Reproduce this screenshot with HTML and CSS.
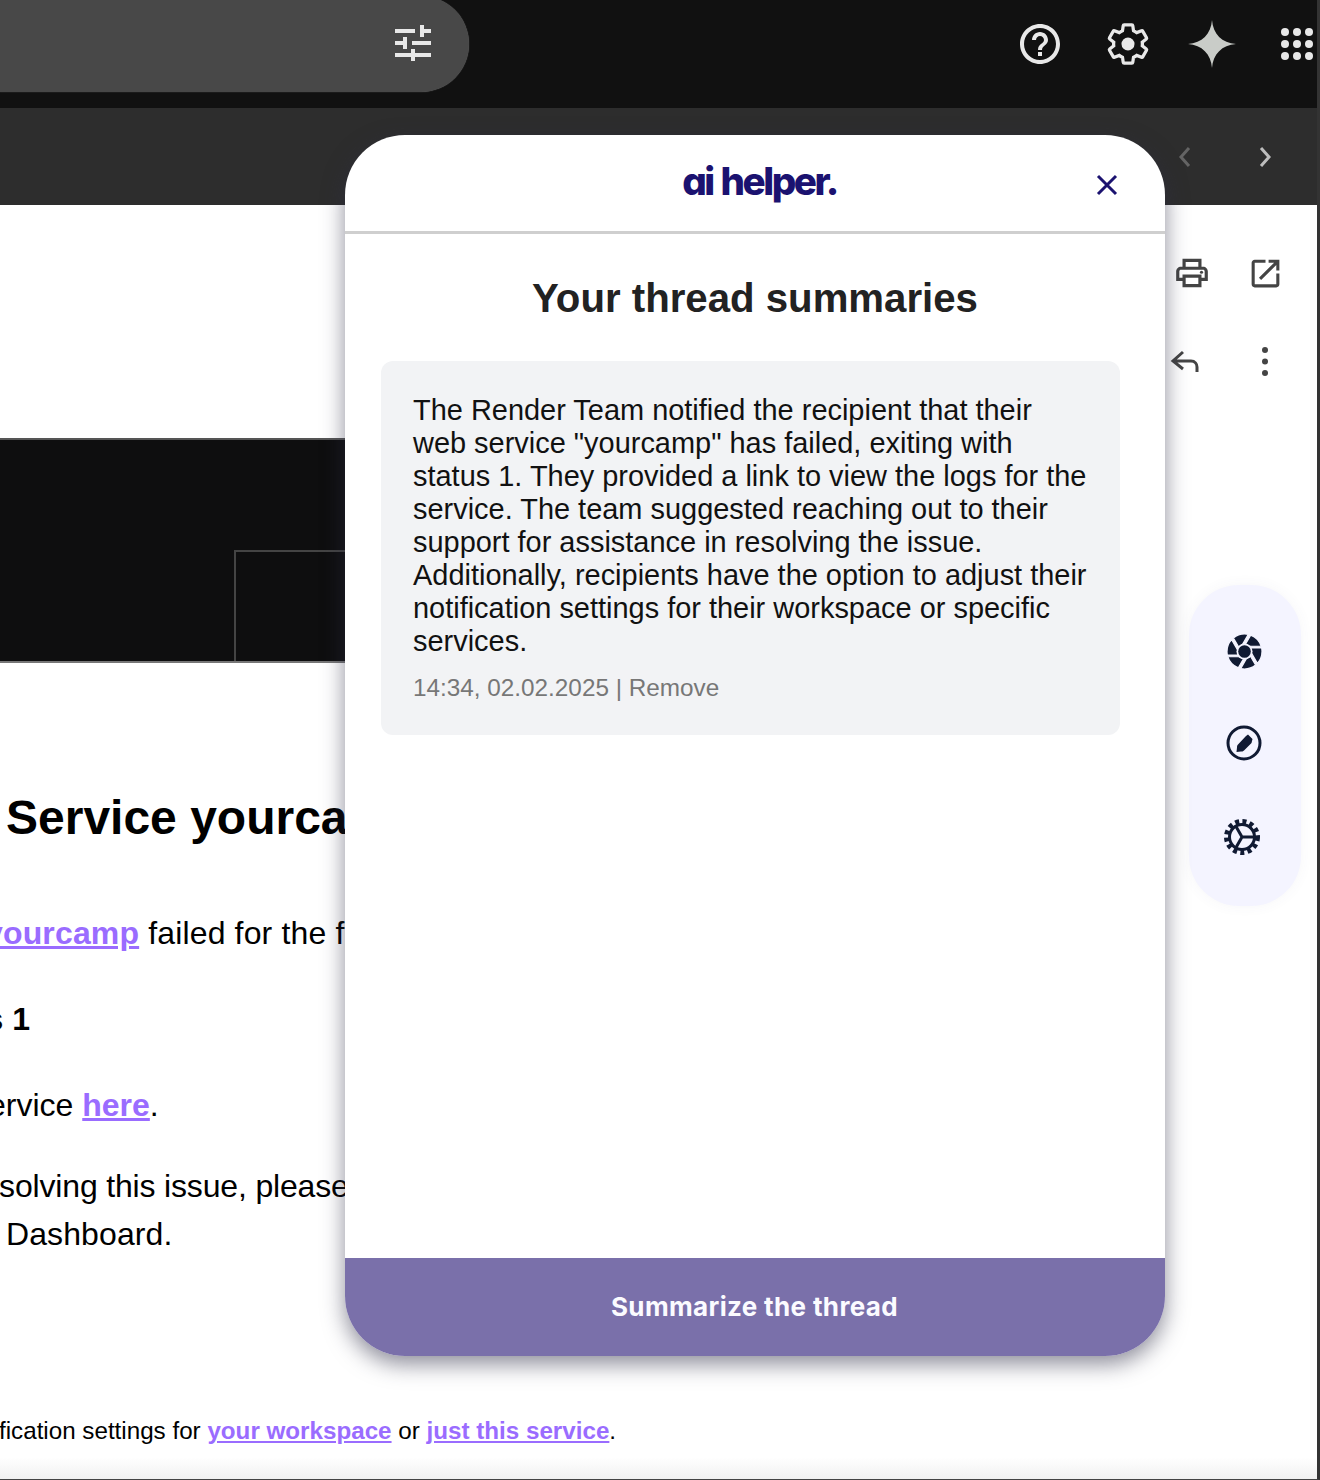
FILE: index.html
```html
<!DOCTYPE html>
<html lang="en">
<head>
<meta charset="utf-8">
<title>Mail with AI helper</title>
<link rel="stylesheet" href="styles.css">
</head>
<body>
<div class="window">
  <header class="topbar">
    <div class="search">
      <svg class="tune" viewBox="0 0 36 36" width="36" height="36" aria-hidden="true">
        <rect x="0" y="4" width="20" height="4"/><rect x="25" y="0" width="4" height="12"/><rect x="29" y="4" width="7" height="4"/>
        <rect x="0" y="16" width="8" height="4"/><rect x="8" y="12" width="4" height="12"/><rect x="17" y="16" width="19" height="4"/>
        <rect x="0" y="28" width="16" height="4"/><rect x="16" y="24" width="4" height="12"/><rect x="20" y="28" width="16" height="4"/>
      </svg>
    </div>
    <div class="top-actions">
      <svg class="ico-help" viewBox="0 0 24 24" width="48" height="48" aria-hidden="true"><path d="M11 18h2v-2h-2v2zm1-16C6.48 2 2 6.48 2 12s4.48 10 10 10 10-4.48 10-10S17.52 2 12 2zm0 18c-4.41 0-8-3.59-8-8s3.59-8 8-8 8 3.59 8 8-3.59 8-8 8zm0-14c-2.21 0-4 1.79-4 4h2c0-1.1.9-2 2-2s2 .9 2 2c0 2-3 1.75-3 5h2c0-2.25 3-2.5 3-5 0-2.21-1.79-4-4-4z"/></svg>
      <svg class="ico-gear" viewBox="0 0 24 24" width="46" height="46" aria-hidden="true"><path class="gear-line" d="M19.43 12.98c.04-.32.07-.64.07-.98s-.03-.66-.07-.98l2.11-1.65c.19-.15.24-.42.12-.64l-2-3.46c-.12-.22-.39-.3-.61-.22l-2.49 1c-.52-.4-1.08-.73-1.69-.98l-.38-2.65C14.46 2.18 14.25 2 14 2h-4c-.25 0-.46.18-.49.42l-.38 2.65c-.61.25-1.17.59-1.69.98l-2.49-1c-.23-.09-.49 0-.61.22l-2 3.46c-.13.22-.07.49.12.64l2.11 1.65c-.04.32-.07.65-.07.98s.03.66.07.98l-2.11 1.65c-.19.15-.24.42-.12.64l2 3.46c.12.22.39.3.61.22l2.49-1c.52.4 1.08.73 1.69.98l.38 2.65c.03.24.24.42.49.42h4c.25 0 .46-.18.49-.42l.38-2.65c.61-.25 1.17-.59 1.69-.98l2.49 1c.23.09.49 0 .61-.22l2-3.46c.12-.22.07-.49-.12-.64l-2.11-1.65z"/><circle class="gear-hub" cx="12" cy="12" r="3.4"/></svg>
      <svg class="ico-spark" viewBox="0 0 48 48" width="48" height="48" aria-hidden="true"><path d="M24 0C25 14 34 23 48 24 34 25 25 34 24 48 23 34 14 25 0 24 14 23 23 14 24 0Z"/></svg>
      <svg class="ico-apps" viewBox="0 0 32 32" width="32" height="32" aria-hidden="true">
        <circle cx="4" cy="4" r="4"/><circle cx="16" cy="4" r="4"/><circle cx="28" cy="4" r="4"/>
        <circle cx="4" cy="16" r="4"/><circle cx="16" cy="16" r="4"/><circle cx="28" cy="16" r="4"/>
        <circle cx="4" cy="28" r="4"/><circle cx="16" cy="28" r="4"/><circle cx="28" cy="28" r="4"/>
      </svg>
    </div>
  </header>

  <nav class="toolbar">
    <svg class="chev chev-dim" viewBox="0 0 14 22" width="14" height="22" aria-hidden="true"><path d="M11 2 3 11l8 9"/></svg>
    <svg class="chev" viewBox="0 0 14 22" width="14" height="22" aria-hidden="true"><path d="M3 2l8 9-8 9"/></svg>
  </nav>

  <main class="mail">
    <article class="letter">
      <div class="banner"><div class="banner-box"></div></div>
      <h1 class="headline">Service yourcamp failed</h1>
      <p class="line l-yourcamp"><a href="#">yourcamp</a> failed for the first time</p>
      <p class="line l-status"><b>status 1</b></p>
      <p class="line l-here">service <a href="#">here</a>.</p>
      <p class="line l-resolving">resolving this issue, please reach out</p>
      <p class="line l-dash">Dashboard.</p>
      <p class="small l-notif">notification settings for <a href="#">your workspace</a> or <a href="#">just this service</a>.</p>
    </article>
    <aside class="mail-tools">
      <div class="tool-row">
        <svg viewBox="0 0 24 24" width="38" height="38" aria-hidden="true"><path d="M19 8h-1V3H6v5H5c-1.66 0-3 1.34-3 3v6h4v4h12v-4h4v-6c0-1.66-1.34-3-3-3zM8 5h8v3H8V5zm8 12v2H8v-4h8v2zm2-2v-2H6v2H4v-4c0-.55.45-1 1-1h14c.55 0 1 .45 1 1v4h-2z"/><circle cx="18" cy="11.5" r="1"/></svg>
        <svg viewBox="0 0 24 24" width="37" height="37" aria-hidden="true"><path d="M19 19H5V5h7V3H5c-1.11 0-2 .9-2 2v14c0 1.1.89 2 2 2h14c1.1 0 2-.9 2-2v-7h-2v7zM14 3v2h3.59l-9.83 9.83 1.41 1.41L19 6.41V10h2V3h-7z"/></svg>
      </div>
      <div class="tool-row tool-row-2">
        <svg class="reply" viewBox="0 0 32 28" width="32" height="28" aria-hidden="true"><path d="M13 4 3 13l10 8M3 13h18c4 0 6 3 6 6v5"/></svg>
        <svg viewBox="0 0 8 32" width="8" height="32" aria-hidden="true"><circle cx="4" cy="4" r="3"/><circle cx="4" cy="15.5" r="3"/><circle cx="4" cy="27" r="3"/></svg>
      </div>
    </aside>
  </main>
  <div class="page-foot"></div>

  <section class="assistant" aria-label="ai helper">
    <header class="assistant-head">
      <span class="logo">ai helper.</span>
      <button class="close" aria-label="Close">
        <svg viewBox="0 0 22 22" width="22" height="22" aria-hidden="true"><path d="M2 2l18 18M20 2 2 20"/></svg>
      </button>
    </header>
    <div class="assistant-body">
      <h2 class="title">Your thread summaries</h2>
      <div class="card">
        <p class="summary">The Render Team notified the recipient that their<br>web service "yourcamp" has failed, exiting with<br>status 1. They provided a link to view the logs for the<br>service. The team suggested reaching out to their<br>support for assistance in resolving the issue.<br>Additionally, recipients have the option to adjust their<br>notification settings for their workspace or specific<br>services.</p>
        <p class="meta">14:34, 02.02.2025 | Remove</p>
      </div>
    </div>
    <button class="cta">Summarize the thread</button>
  </section>

  <aside class="side-panel">
    <svg class="s1" viewBox="2 2 20 20" width="35" height="35" aria-hidden="true"><path class="blades" d="M9.4 10.5l4.77-8.26C13.47 2.09 12.75 2 12 2c-2.4 0-4.6.85-6.32 2.25l3.66 6.35.06-.1zM21.54 9c-.92-2.92-3.15-5.26-6-6.34L11.88 9h9.66zm.26 1h-7.49l.29.5 4.76 8.25C21 16.97 22 14.61 22 12c0-.69-.07-1.35-.2-2zM8.54 12l-3.9-6.75C3.01 7.03 2 9.39 2 12c0 .69.07 1.35.2 2h7.49l-1.15-2zm-6.08 3c.92 2.92 3.15 5.26 6 6.34L12.12 15H2.46zm11.27 0l-3.9 6.76c.7.15 1.42.24 2.17.24 2.4 0 4.6-.85 6.32-2.25l-3.66-6.35-.93 1.6z"/><circle class="lens-gap" cx="12" cy="12" r="4.6"/><circle cx="12" cy="12" r="3.6"/></svg>
    <svg class="s2" viewBox="0 0 36 36" width="36" height="36" aria-hidden="true"><circle class="ring" cx="18" cy="18" r="16"/><path d="M22 9.500l4.500 4.500-1 4-7.500 7.500c-1 1-2 1-3 1l-4.500 .500 .500-4.500c0-1 0-2 1-3L20 11z"/></svg>
    <svg class="s3" viewBox="0 0 36 36" width="36" height="36" aria-hidden="true"><circle class="teeth" cx="18" cy="18" r="15.500"/><circle class="ring" cx="18" cy="18" r="12.500"/><path class="spokes" d="M18 18h12M18 18l-6-10.400M18 18l-6 10.400"/></svg>
  </aside>
</div>
</body>
</html>
```
FILE: styles.css
```css
* { box-sizing: border-box; }
html, body { margin: 0; padding: 0; background: #fff; }
body { font-family: "Liberation Sans", Arial, sans-serif; color: #000; }

.window {
  position: relative;
  width: 1320px;
  height: 1480px;
  overflow: hidden;
  display: flex;
  flex-direction: column;
  background: #fff;
  border-right: 3px solid #333;
  border-bottom: 1px solid #444;
}

/* top bar */
.topbar {
  height: 108px;
  flex: none;
  display: flex;
  align-items: flex-start;
  background: #111;
}
.search {
  width: 469px;
  height: 96px;
  margin-top: -4px;
  flex: none;
  display: flex;
  justify-content: flex-end;
  align-items: center;
  padding-right: 38px;
  background: #484848;
  border-radius: 0 48px 48px 0;
  box-shadow: 0 0 1px #777;
}
.tune { fill: #e8e8e8; margin-top: -2px; }
.top-actions {
  margin-left: auto;
  height: 88px;
  display: flex;
  align-items: center;
}
.top-actions svg { flex: none; fill: #e8e8e8; }
.ico-gear { margin-left: 41px; }
.gear-line { fill: none; stroke: #e8e8e8; stroke-width: 1.7; }
.ico-spark { margin-left: 37px; }
.ico-spark path { fill: #c9ccc8; }
.ico-apps { margin-left: 45px; margin-right: 4px; }

/* toolbar */
.toolbar {
  height: 97px;
  flex: none;
  display: flex;
  align-items: center;
  justify-content: flex-end;
  gap: 66px;
  padding: 0 45px 0 0;
  background: #2d2d2d;
}
.chev { fill: none; stroke: #bdbdbd; stroke-width: 3; }
.chev-dim { stroke: #646464; }

/* mail */
.mail { flex: 1; display: flex; min-height: 0; }
.letter { flex: 1; min-width: 0; padding-top: 233px; }
.banner {
  width: 600px;
  height: 225px;
  padding: 110px 0 0 234px;
  background: #0e0e0f;
  border-top: 2px solid #555;
  border-bottom: 2px solid #777;
}
.banner-box {
  height: 100%;
  border-left: 2px solid #444;
  border-top: 2px solid #444;
}
.headline {
  margin: 131px 0 0 6px;
  height: 48px;
  font-size: 48px;
  line-height: 48px;
  font-weight: 700;
  white-space: nowrap;
}
.line {
  margin: 0;
  height: 48px;
  font-size: 32px;
  line-height: 48px;
  white-space: nowrap;
}
.line a, .small a { color: #9a6cff; font-weight: 700; }
.l-yourcamp { margin: 67px 0 0 -15px; letter-spacing: .15px; }
.l-status { margin: 38px 0 0 -91px; }
.l-here { margin: 38px 0 0 -28px; }
.l-resolving { margin: 33px 0 0 -29px; letter-spacing: -.17px; }
.l-dash { margin-left: 6px; letter-spacing: .1px; }
.small { font-size: 24.2px; line-height: 32px; height: 32px; white-space: nowrap; }
.l-notif { margin: 157px 0 0 -40px; }

.mail-tools {
  flex: none;
  width: 152px;
  padding: 49px 0 0 0;
}
.mail-tools svg { fill: #444; flex: none; }
.tool-row { display: flex; align-items: center; justify-content: space-between; height: 38px; padding: 0 33px 0 8px; width: 152px; }
.tool-row-2 { margin-top: 51px; padding: 0 48px 0 5px; }
.mail-tools .reply { fill: none; stroke: #444; stroke-width: 3; }

.page-foot {
  position: absolute;
  left: 0; right: 0; bottom: 0;
  height: 22px;
  background: linear-gradient(#fff, #f1f1f1);
}

/* assistant modal */
.assistant {
  position: absolute;
  left: 345px;
  top: 135px;
  width: 820px;
  height: 1221px;
  display: flex;
  flex-direction: column;
  overflow: hidden;
  background: #fff;
  border-radius: 60px;
  box-shadow: 0 8px 22px rgba(45, 45, 70, .55);
  z-index: 2;
}
.assistant-head {
  position: relative;
  flex: none;
  height: 99px;
  display: flex;
  justify-content: center;
  align-items: center;
  border-bottom: 3px solid #cfcfcf;
}
.logo {
  font-family: Inter, "Noto Sans", sans-serif;
  font-feature-settings: "cv11";
  font-weight: 800;
  font-size: 38.6px;
  word-spacing: 2px;
  letter-spacing: -2.5px;
  color: #1b1270;
  margin: 0 0 4px 9px;
}
.close {
  position: absolute;
  right: 47px;
  top: 39px;
  width: 22px;
  height: 22px;
  padding: 0;
  border: 0;
  background: none;
}
.close svg { display: block; fill: none; stroke: #1b1270; stroke-width: 3; }

.assistant-body { flex: 1; padding: 41px 45px 0 36px; }
.title {
  margin: 0 0 0 9px;
  text-align: center;
  font-size: 40.2px;
  line-height: 48px;
  font-weight: 700;
  color: #222;
}
.card {
  margin-top: 38px;
  height: 374px;
  padding: 33px 32px 0;
  background: #f2f3f5;
  border-radius: 12px;
}
.summary {
  margin: 0;
  font-size: 28.95px;
  line-height: 33px;
  color: #111;
  white-space: nowrap;
}
.meta {
  margin: 13px 0 0;
  font-size: 24.3px;
  line-height: 33px;
  color: #777;
}
.cta {
  flex: none;
  height: 98px;
  border: 0;
  background: #7a70aa;
  color: #fbfbff;
  font-family: Inter, "Noto Sans", sans-serif;
  font-weight: 700;
  font-size: 26px;
  letter-spacing: .35px;
  padding: 0 1px 2px 0;
}

/* side panel */
.side-panel {
  position: absolute;
  left: 1189px;
  top: 585px;
  width: 112px;
  height: 321px;
  background: #f4f4ff;
  border-radius: 50px;
  box-shadow: 0 0 14px rgba(80, 80, 110, .05);
}
.side-panel svg { position: absolute; fill: #101a33; }
.s1 { left: 38px; top: 49px; }
.s2 { left: 37px; top: 140px; }
.s3 { left: 35px; top: 234px; }
.side-panel .blades { stroke: #f4f4ff; stroke-width: .7; }
.side-panel .lens-gap { fill: #f4f4ff; }
.side-panel .ring { fill: none; stroke: #101a33; stroke-width: 3; }
.side-panel .teeth { fill: none; stroke: #101a33; stroke-width: 5; stroke-dasharray: 4 3.3; }
.side-panel .spokes { fill: none; stroke: #101a33; stroke-width: 3; }
```
